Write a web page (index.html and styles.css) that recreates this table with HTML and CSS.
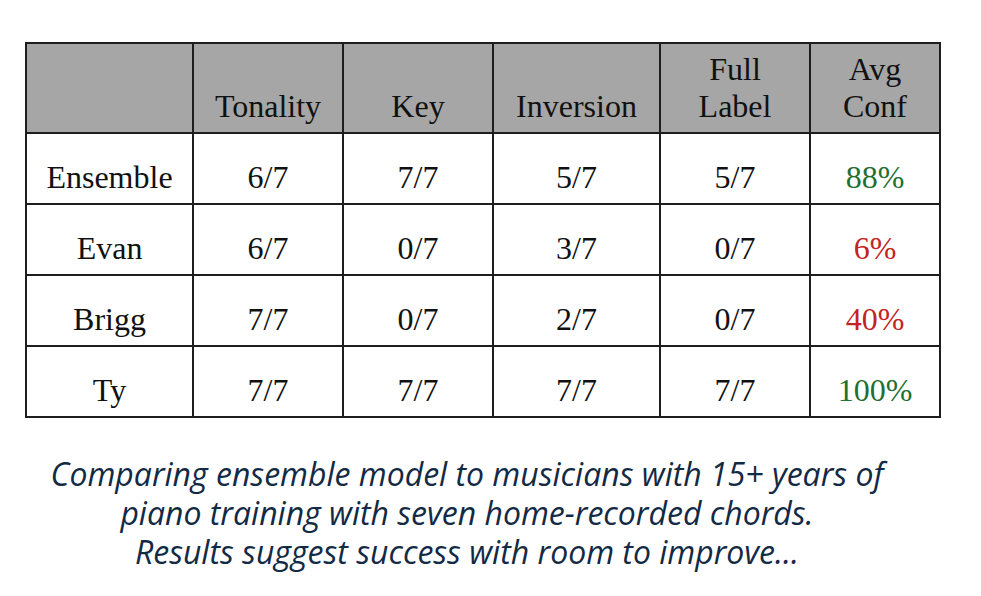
FILE: index.html
```html
<!DOCTYPE html>
<html>
<head>
<meta charset="utf-8">
<link rel="stylesheet" href="styles.css">
</head>
<body>
<div class="page">
  <table class="results">
    <colgroup>
      <col class="c-name">
      <col class="c-mid">
      <col class="c-mid">
      <col class="c-wide">
      <col class="c-mid">
      <col class="c-last">
    </colgroup>
    <thead>
      <tr>
        <th></th>
        <th>Tonality</th>
        <th>Key</th>
        <th>Inversion</th>
        <th>Full<br>Label</th>
        <th>Avg<br>Conf</th>
      </tr>
    </thead>
    <tbody>
      <tr><td>Ensemble</td><td>6/7</td><td>7/7</td><td>5/7</td><td>5/7</td><td class="good">88%</td></tr>
      <tr><td>Evan</td><td>6/7</td><td>0/7</td><td>3/7</td><td>0/7</td><td class="bad">6%</td></tr>
      <tr><td>Brigg</td><td>7/7</td><td>0/7</td><td>2/7</td><td>0/7</td><td class="bad">40%</td></tr>
      <tr><td>Ty</td><td>7/7</td><td>7/7</td><td>7/7</td><td>7/7</td><td class="good">100%</td></tr>
    </tbody>
  </table>
  <p class="caption">Comparing ensemble model to musicians with 15+ years of<br>piano training with seven home-recorded chords.<br>Results suggest success with room to improve...</p>
</div>
</body>
</html>
```
FILE: styles.css
```css
html, body {
  margin: 0;
  padding: 0;
  background: #ffffff;
}
.page {
  width: 981px;
  height: 596px;
  padding-top: 42px;
  padding-left: 25px;
  box-sizing: border-box;
}
.results {
  border-collapse: collapse;
  table-layout: fixed;
  width: 914px;
  font-family: "Liberation Serif", "Times New Roman", serif;
  font-size: 32px;
  color: #111;
}
.c-name { width: 167px; }
.c-mid { width: 150px; }
.c-wide { width: 167px; }
.c-last { width: 130px; }
.results th,
.results td {
  border: 2px solid #1e1e1e;
  text-align: center;
  vertical-align: bottom;
  padding: 0 0 7px 0;
  font-weight: normal;
  line-height: 37px;
}
.results th {
  background: #a6a6a6;
  height: 81px;
}
.results td {
  height: 62px;
}
.results .good { color: #1f7032; }
.results .bad { color: #c4231f; }
.caption {
  margin: 36px 0 0 0;
  width: 884px;
  text-align: center;
  font-family: "Open Sans", sans-serif;
  font-style: italic;
  font-size: 32px;
  line-height: 39px;
  color: #132a45;
}
```
